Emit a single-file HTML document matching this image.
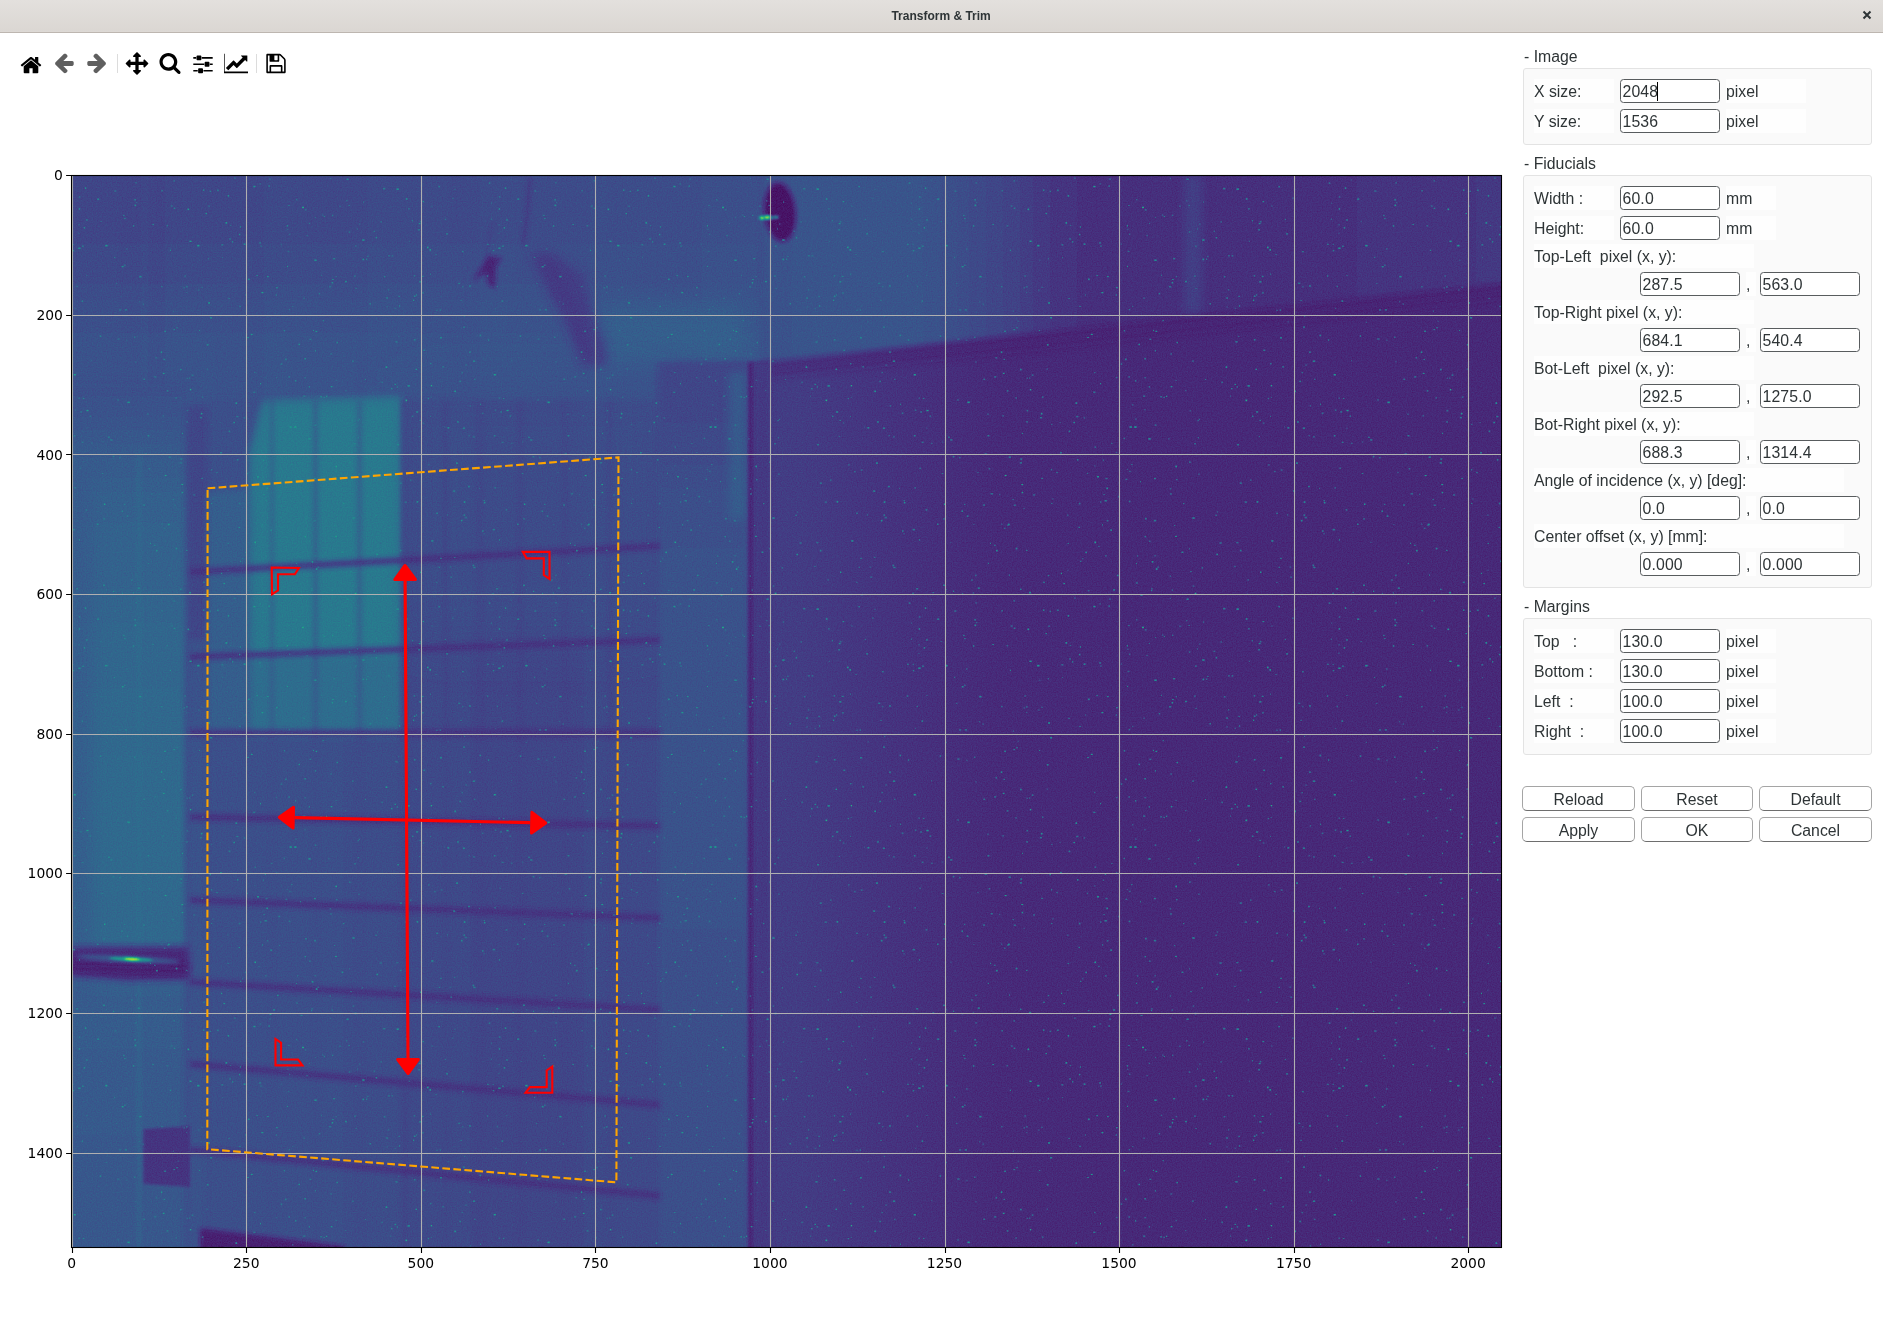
<!DOCTYPE html>
<html><head><meta charset="utf-8"><title>Transform &amp; Trim</title>
<style>
html,body{margin:0;padding:0}
#root{position:absolute;left:0;top:0;width:1883px;height:1343px;will-change:transform}
body{width:1883px;height:1343px;background:#fff;position:relative;overflow:hidden;font-family:"Liberation Sans","DejaVu Sans",sans-serif;color:#2e3436}
.tbar{position:absolute;left:0;top:0;width:1883px;height:32px;background:linear-gradient(#e3e0dd,#dbd7d3 94%,#dedad6);border-bottom:1px solid #bdb6b0}
.ttl{position:absolute;left:-0.4px;width:1883px;top:0;height:33px;line-height:33px;text-align:center;font-weight:bold;font-size:12px;color:#2e3436}
.cls{position:absolute;left:1862px;top:10px;width:10px;height:10px}
.ic{position:absolute;top:51px}
.sep{position:absolute;top:54px;width:1px;height:19px;background:#dcdcdc}
.tl{font-family:"DejaVu Sans","Liberation Sans",sans-serif;font-size:13.89px;fill:#000}
.hd{position:absolute;left:1524px;height:18px;line-height:18px;font-size:15.8px;white-space:nowrap}
.gb{position:absolute;left:1523px;width:349px;background:#fafafa;border:1px solid #e3e3e3;border-radius:3px;box-sizing:border-box}
.lb{position:absolute;background:#fefefe;font-size:15.8px;white-space:nowrap;overflow:hidden}
.sp{position:absolute}
.en{position:absolute;width:100px;height:24px;box-sizing:border-box;border:1px solid #585c5e;border-radius:3.5px;background:#fff;font-size:15.8px;line-height:22px;padding-top:0.5px;padding-left:1.5px;letter-spacing:0.15px;white-space:nowrap}
.cur{display:inline-block;width:1px;height:19px;background:#000;vertical-align:-4px;margin-left:-1px}
.bt{position:absolute;width:113px;height:25px;box-sizing:border-box;border:1px solid #a5a5a5;border-bottom-color:#6e6e6e;border-radius:5px;background:#fff;text-align:center;font-size:15.8px;line-height:23px;padding-top:1px}
</style></head><body><div id="root">
<div class="tbar"></div><div class="ttl">Transform &amp; Trim</div>
<svg class="cls" viewBox="0 0 10 10"><path d="M1.5 1.5 L8.5 8.5 M8.5 1.5 L1.5 8.5" stroke="#2e3436" stroke-width="2" fill="none"/></svg>
<svg class="ic" style="left:19px" viewBox="0 0 72 72" width="24" height="24"><path fill="#000" d="M 57.9 45.9 C 57.9 45.9 57.9 45.8 57.8 45.7 L 36 27.7 L 14.2 45.7 C 14.2 45.8 14.1 45.9 14.1 45.9 L 14.1 64.2 C 14.1 65.5 15.2 66.6 16.6 66.6 L 31.1 66.6 L 31.1 52 L 40.9 52 L 40.9 66.6 L 55.4 66.6 C 56.8 66.6 57.9 65.5 57.9 64.2 z M 66.3 43.3 C 66.7 42.8 66.7 42 66.2 41.6 L 57.9 34.7 L 57.9 19.2 C 57.9 18.5 57.3 18 56.6 18 L 49.4 18 C 48.7 18 48.1 18.5 48.1 19.2 L 48.1 26.6 L 38.9 18.9 C 37.3 17.6 34.7 17.6 33.1 18.9 L 5.8 41.6 C 5.3 42 5.3 42.8 5.7 43.3 L 8 46.1 C 8.2 46.4 8.5 46.5 8.8 46.5 C 9.2 46.6 9.5 46.5 9.7 46.3 L 36 24.4 L 62.3 46.3 C 62.5 46.5 62.7 46.5 63.1 46.5 C 63.1 46.5 63.1 46.5 63.2 46.5 C 63.5 46.5 63.8 46.4 64 46.1 z"/></svg>
<svg class="ic" style="left:52px" viewBox="0 0 72 72" width="24" height="24"><path fill="#5f5f5f" d="M 65.1 35 C 65.1 32.4 63.4 30.2 60.7 30.2 L 34 30.2 L 45.1 19 C 46 18.1 46.6 16.9 46.6 15.6 C 46.6 14.3 46 13 45.1 12.1 L 42.3 9.3 C 41.3 8.4 40.1 7.9 38.8 7.9 C 37.6 7.9 36.3 8.4 35.4 9.3 L 10.7 34 C 9.8 34.9 9.3 36.1 9.3 37.4 C 9.3 38.7 9.8 40 10.7 40.9 L 35.4 65.6 C 36.3 66.5 37.6 67 38.8 67 C 40.1 67 41.4 66.5 42.3 65.6 L 45.1 62.7 C 46 61.8 46.6 60.6 46.6 59.3 C 46.6 58 46 56.8 45.1 55.9 L 34 44.7 L 60.7 44.7 C 63.4 44.7 65.1 42.4 65.1 39.9 z"/></svg>
<svg class="ic" style="left:85px" viewBox="0 0 72 72" width="24" height="24"><path fill="#5f5f5f" d="M 62.7 37.4 C 62.7 36.1 62.2 34.9 61.3 34 L 36.6 9.3 C 35.7 8.4 34.4 7.9 33.2 7.9 C 31.9 7.9 30.6 8.4 29.7 9.3 L 26.9 12.2 C 26 13 25.4 14.3 25.4 15.6 C 25.4 16.9 26 18.1 26.9 19 L 38 30.2 L 11.3 30.2 C 8.6 30.2 6.9 32.4 6.9 35 L 6.9 39.9 C 6.9 42.4 8.6 44.7 11.3 44.7 L 38 44.7 L 26.9 55.8 C 26 56.8 25.4 58 25.4 59.3 C 25.4 60.6 26 61.8 26.9 62.7 L 29.7 65.6 C 30.6 66.5 31.9 67 33.2 67 C 34.4 67 35.7 66.5 36.6 65.6 L 61.3 40.9 C 62.2 40 62.7 38.7 62.7 37.4"/></svg>
<svg class="ic" style="left:125px" viewBox="0 0 72 72" width="24" height="24"><path fill="#000" d="M 70 37.4 C 70 36.8 69.7 36.2 69.3 35.7 L 59.6 26 C 59.1 25.6 58.5 25.3 57.9 25.3 C 56.5 25.3 55.4 26.4 55.4 27.7 L 55.4 32.6 L 40.9 32.6 L 40.9 18 L 45.7 18 C 47 18 48.1 16.9 48.1 15.6 C 48.1 14.9 47.9 14.3 47.4 13.9 L 37.7 4.2 C 37.3 3.7 36.6 3.4 36 3.4 C 35.4 3.4 34.7 3.7 34.3 4.2 L 24.6 13.9 C 24.1 14.3 23.9 14.9 23.9 15.6 C 23.9 16.9 25 18 26.3 18 L 31.1 18 L 31.1 32.6 L 16.6 32.6 L 16.6 27.7 C 16.6 26.4 15.5 25.3 14.1 25.3 C 13.5 25.3 12.9 25.6 12.4 26 L 2.7 35.7 C 2.3 36.2 2 36.8 2 37.4 C 2 38.1 2.3 38.7 2.7 39.2 L 12.4 48.9 C 12.9 49.3 13.5 49.6 14.1 49.6 C 15.5 49.6 16.6 48.5 16.6 47.2 L 16.6 42.3 L 31.1 42.3 L 31.1 56.9 L 26.3 56.9 C 25 56.9 23.9 58 23.9 59.3 C 23.9 59.9 24.1 60.5 24.6 61 L 34.3 70.7 C 34.7 71.2 35.4 71.4 36 71.4 C 36.6 71.4 37.3 71.2 37.7 70.7 L 47.4 61 C 47.9 60.5 48.1 59.9 48.1 59.3 C 48.1 58 47 56.9 45.7 56.9 L 40.9 56.9 L 40.9 42.3 L 55.4 42.3 L 55.4 47.2 C 55.4 48.5 56.5 49.6 57.9 49.6 C 58.5 49.6 59.1 49.3 59.6 48.9 L 69.3 39.2 C 69.7 38.7 70 38.1 70 37.4"/></svg>
<svg class="ic" style="left:158px" viewBox="0 0 72 72" width="24" height="24"><path fill="#000" d="M 48.1 32.6 C 48.1 42 40.5 49.6 31.1 49.6 C 21.8 49.6 14.1 42 14.1 32.6 C 14.1 23.2 21.8 15.6 31.1 15.6 C 40.5 15.6 48.1 23.2 48.1 32.6 M 67.6 64.2 C 67.6 62.9 67 61.6 66.2 60.7 L 53.2 47.7 C 56.2 43.3 57.9 38 57.9 32.6 C 57.9 17.8 45.9 5.9 31.1 5.9 C 16.4 5.9 4.4 17.8 4.4 32.6 C 4.4 47.3 16.4 59.3 31.1 59.3 C 36.5 59.3 41.8 57.7 46.3 54.6 L 59.3 67.6 C 60.2 68.5 61.4 69 62.7 69 C 65.4 69 67.6 66.8 67.6 64.2"/></svg>
<svg class="ic" style="left:191px" viewBox="0 0 72 72" width="24" height="24"><path fill="#000" d="M 20.2 56.9 L 6.9 56.9 L 6.9 61.7 L 20.2 61.7 z M 33.6 52 L 23.9 52 C 22.5 52 21.4 53.1 21.4 54.4 L 21.4 64.2 C 21.4 65.5 22.5 66.6 23.9 66.6 L 33.6 66.6 C 34.9 66.6 36 65.5 36 64.2 L 36 54.4 C 36 53.1 34.9 52 33.6 52 M 39.6 37.4 L 6.9 37.4 L 6.9 42.3 L 39.6 42.3 z M 15.4 18 L 6.9 18 L 6.9 22.9 L 15.4 22.9 z M 65.1 56.9 L 37.2 56.9 L 37.2 61.7 L 65.1 61.7 z M 28.7 13.2 L 19 13.2 C 17.7 13.2 16.6 14.3 16.6 15.6 L 16.6 25.3 C 16.6 26.6 17.7 27.7 19 27.7 L 28.7 27.7 C 30 27.7 31.1 26.6 31.1 25.3 L 31.1 15.6 C 31.1 14.3 30 13.2 28.7 13.2 M 53 32.6 L 43.3 32.6 C 42 32.6 40.9 33.7 40.9 35 L 40.9 44.7 C 40.9 46.1 42 47.2 43.3 47.2 L 53 47.2 C 54.3 47.2 55.4 46.1 55.4 44.7 L 55.4 35 C 55.4 33.7 54.3 32.6 53 32.6 M 65.1 37.4 L 56.6 37.4 L 56.6 42.3 L 65.1 42.3 z M 65.1 18 L 32.4 18 L 32.4 22.9 L 65.1 22.9 z"/></svg>
<svg class="ic" style="left:224px" viewBox="0 0 72 72" width="24" height="24"><path fill="#000" d="M 74.9 61.7 L 2 61.7 L 2 8.3 L -2.9 8.3 L -2.9 66.6 L 74.9 66.6 z M 70 14.4 C 70 13.7 69.5 13.2 68.8 13.2 L 52.3 13.2 C 51.2 13.2 50.7 14.4 51.4 15.2 L 56 19.8 L 38.4 37.4 L 29.6 28.6 C 29.1 28.1 28.3 28.1 27.8 28.6 L 5.6 50.8 L 12.9 58.1 L 28.7 42.3 L 37.6 51.1 C 38.1 51.6 38.8 51.6 39.3 51.1 L 63.3 27.1 L 67.9 31.7 C 68.7 32.5 70 31.9 70 30.9 z"/></svg>
<svg class="ic" style="left:264px" viewBox="0 0 72 72" width="24" height="24"><path fill="#000" d="M 21.4 61.7 L 21.4 47.2 L 50.6 47.2 L 50.6 61.7 z M 55.4 61.7 L 55.4 45.9 C 55.4 43.9 53.8 42.3 51.8 42.3 L 20.2 42.3 C 18.2 42.3 16.6 43.9 16.6 45.9 L 16.6 61.7 L 11.7 61.7 L 11.7 13.2 L 16.6 13.2 L 16.6 28.9 C 16.6 31 18.2 32.6 20.2 32.6 L 42.1 32.6 C 44.1 32.6 45.7 31 45.7 28.9 L 45.7 13.2 C 46.5 13.2 48 13.8 48.5 14.3 L 59.1 25 C 59.6 25.5 60.3 27 60.3 27.7 L 60.3 61.7 z M 40.9 26.5 C 40.9 27.2 40.3 27.7 39.6 27.7 L 32.4 27.7 C 31.7 27.7 31.1 27.2 31.1 26.5 L 31.1 14.4 C 31.1 13.7 31.7 13.2 32.4 13.2 L 39.6 13.2 C 40.3 13.2 40.9 13.7 40.9 14.4 z M 65.1 27.7 C 65.1 25.7 64 22.9 62.6 21.5 L 51.9 10.9 C 50.5 9.4 47.7 8.3 45.7 8.3 L 10.5 8.3 C 8.5 8.3 6.9 9.9 6.9 11.9 L 6.9 62.9 C 6.9 65 8.5 66.6 10.5 66.6 L 61.5 66.6 C 63.5 66.6 65.1 65 65.1 62.9 z"/></svg>
<div class="sep" style="left:117px"></div><div class="sep" style="left:256px"></div>
<svg width="1512" height="1343" viewBox="0 0 1512 1343" style="position:absolute;left:0;top:0">
<defs><filter id="b1" filterUnits="userSpaceOnUse" x="0" y="100" width="1600" height="1250"><feGaussianBlur stdDeviation="1"/></filter><filter id="b2" filterUnits="userSpaceOnUse" x="0" y="100" width="1600" height="1250"><feGaussianBlur stdDeviation="2"/></filter><filter id="b3" filterUnits="userSpaceOnUse" x="0" y="100" width="1600" height="1250"><feGaussianBlur stdDeviation="3"/></filter><filter id="b4" filterUnits="userSpaceOnUse" x="0" y="100" width="1600" height="1250"><feGaussianBlur stdDeviation="4"/></filter><filter id="b5" filterUnits="userSpaceOnUse" x="0" y="100" width="1600" height="1250"><feGaussianBlur stdDeviation="5"/></filter><filter id="b6" filterUnits="userSpaceOnUse" x="0" y="100" width="1600" height="1250"><feGaussianBlur stdDeviation="6"/></filter><filter id="b8" filterUnits="userSpaceOnUse" x="0" y="100" width="1600" height="1250"><feGaussianBlur stdDeviation="8"/></filter><filter id="b10" filterUnits="userSpaceOnUse" x="0" y="100" width="1600" height="1250"><feGaussianBlur stdDeviation="10"/></filter><filter id="b12" filterUnits="userSpaceOnUse" x="0" y="100" width="1600" height="1250"><feGaussianBlur stdDeviation="12"/></filter><filter id="b14" filterUnits="userSpaceOnUse" x="0" y="100" width="1600" height="1250"><feGaussianBlur stdDeviation="14"/></filter><filter id="b20" filterUnits="userSpaceOnUse" x="0" y="100" width="1600" height="1250"><feGaussianBlur stdDeviation="20"/></filter><filter id="b25" filterUnits="userSpaceOnUse" x="0" y="100" width="1600" height="1250"><feGaussianBlur stdDeviation="25"/></filter><filter id="b28" filterUnits="userSpaceOnUse" x="0" y="100" width="1600" height="1250"><feGaussianBlur stdDeviation="28"/></filter><filter id="b30" filterUnits="userSpaceOnUse" x="0" y="100" width="1600" height="1250"><feGaussianBlur stdDeviation="30"/></filter><filter id="b40" filterUnits="userSpaceOnUse" x="0" y="100" width="1600" height="1250"><feGaussianBlur stdDeviation="40"/></filter><linearGradient id="gbase" gradientUnits="userSpaceOnUse" x1="750" y1="0" x2="1501" y2="0"><stop offset="0.0000" stop-color="#2e2e2e"/><stop offset="0.0666" stop-color="#2d2d2d"/><stop offset="0.1411" stop-color="#282828"/><stop offset="0.2077" stop-color="#242424"/><stop offset="0.3329" stop-color="#1e1e1e"/><stop offset="0.5326" stop-color="#1d1d1d"/><stop offset="1.0000" stop-color="#1d1d1d"/></linearGradient><linearGradient id="gup" gradientUnits="userSpaceOnUse" x1="760" y1="0" x2="1501" y2="0"><stop offset="0.0000" stop-color="#404040"/><stop offset="0.0810" stop-color="#434343"/><stop offset="0.2159" stop-color="#424242"/><stop offset="0.3320" stop-color="#333333"/><stop offset="0.4049" stop-color="#262626"/><stop offset="0.4669" stop-color="#222222"/><stop offset="0.7287" stop-color="#202020"/><stop offset="0.7962" stop-color="#242424"/><stop offset="0.8718" stop-color="#282828"/><stop offset="1.0000" stop-color="#292929"/></linearGradient><linearGradient id="gtopv" gradientUnits="userSpaceOnUse" x1="0" y1="176" x2="0" y2="400"><stop offset="0.0000" stop-color="#353535"/><stop offset="0.2411" stop-color="#363636"/><stop offset="0.4196" stop-color="#383838"/><stop offset="0.5982" stop-color="#3d3d3d"/><stop offset="0.7768" stop-color="#404040"/><stop offset="1.0000" stop-color="#404040"/></linearGradient><linearGradient id="gtoph" gradientUnits="userSpaceOnUse" x1="100" y1="0" x2="760" y2="0"><stop offset="0.0000" stop-color="#4c4c4c" stop-opacity="0"/><stop offset="0.3727" stop-color="#4c4c4c" stop-opacity="0.13"/><stop offset="0.9182" stop-color="#4c4c4c" stop-opacity="0.3"/><stop offset="1.0000" stop-color="#4c4c4c" stop-opacity="0.3"/></linearGradient><linearGradient id="gcol" gradientUnits="userSpaceOnUse" x1="0" y1="384" x2="0" y2="1250"><stop offset="0.0000" stop-color="#3d3d3d"/><stop offset="0.0647" stop-color="#454545"/><stop offset="0.1339" stop-color="#4e4e4e"/><stop offset="0.4804" stop-color="#575757"/><stop offset="0.6363" stop-color="#555555"/><stop offset="0.7113" stop-color="#4a4a4a"/><stop offset="0.8083" stop-color="#464646"/><stop offset="1.0000" stop-color="#454545"/></linearGradient><linearGradient id="gboard" gradientUnits="userSpaceOnUse" x1="208" y1="0" x2="660" y2="0"><stop offset="0.0000" stop-color="#3e3e3e"/><stop offset="0.2035" stop-color="#3d3d3d"/><stop offset="0.4690" stop-color="#393939"/><stop offset="0.6460" stop-color="#353535"/><stop offset="0.8673" stop-color="#373737"/><stop offset="1.0000" stop-color="#383838"/></linearGradient><linearGradient id="grb" gradientUnits="userSpaceOnUse" x1="0" y1="362" x2="0" y2="1250"><stop offset="0.0000" stop-color="#343434"/><stop offset="0.0766" stop-color="#373737"/><stop offset="0.1779" stop-color="#3e3e3e"/><stop offset="0.2680" stop-color="#404040"/><stop offset="0.3806" stop-color="#404040"/><stop offset="1.0000" stop-color="#3d3d3d"/></linearGradient><pattern id="salt" patternUnits="userSpaceOnUse" width="420" height="420" x="72" y="176"><rect x="32.0" y="327.6" width="1.3" height="1.3" fill="#989898"/><rect x="129.4" y="110.8" width="1.5" height="1.0" fill="#5b5b5b"/><rect x="6.7" y="221.7" width="0.9" height="0.9" fill="#8c8c8c"/><rect x="165.0" y="283.2" width="1.3" height="1.3" fill="#858585"/><rect x="390.4" y="110.3" width="0.9" height="0.9" fill="#7f7f7f"/><rect x="357.5" y="73.1" width="1.5" height="1.5" fill="#959595"/><rect x="150.1" y="81.2" width="0.9" height="0.9" fill="#646464"/><rect x="257.8" y="399.5" width="1.1" height="1.1" fill="#696969"/><rect x="322.8" y="131.9" width="0.9" height="0.9" fill="#696969"/><rect x="148.3" y="276.1" width="1.3" height="1.3" fill="#949494"/><rect x="175.9" y="414.2" width="1.5" height="1.0" fill="#636363"/><rect x="211.7" y="261.8" width="1.3" height="1.3" fill="#686868"/><rect x="280.2" y="184.6" width="1.5" height="1.0" fill="#797979"/><rect x="309.4" y="205.6" width="1.5" height="1.5" fill="#5a5a5a"/><rect x="248.9" y="98.8" width="1.1" height="1.1" fill="#606060"/><rect x="198.4" y="353.4" width="1.5" height="1.5" fill="#7a7a7a"/><rect x="194.5" y="311.6" width="1.5" height="1.5" fill="#848484"/><rect x="136.3" y="126.2" width="1.5" height="1.5" fill="#969696"/><rect x="188.2" y="325.5" width="1.1" height="1.1" fill="#797979"/><rect x="335.6" y="209.1" width="2.2" height="1.5" fill="#838383"/><rect x="112.6" y="99.5" width="1.0" height="1.0" fill="#919191"/><rect x="97.9" y="73.8" width="1.0" height="1.0" fill="#8f8f8f"/><rect x="276.7" y="29.1" width="0.9" height="0.9" fill="#8d8d8d"/><rect x="396.3" y="309.9" width="1.3" height="1.3" fill="#8d8d8d"/><rect x="215.6" y="74.9" width="1.7" height="1.1" fill="#5a5a5a"/><rect x="348.0" y="395.6" width="1.3" height="1.3" fill="#8d8d8d"/><rect x="276.8" y="55.6" width="1.4" height="0.9" fill="#7b7b7b"/><rect x="71.2" y="328.5" width="1.7" height="1.1" fill="#777777"/><rect x="231.2" y="219.5" width="2.0" height="1.3" fill="#686868"/><rect x="368.2" y="381.9" width="1.5" height="1.0" fill="#747474"/><rect x="355.0" y="70.7" width="1.5" height="1.5" fill="#8c8c8c"/><rect x="144.2" y="296.1" width="1.5" height="1.0" fill="#696969"/><rect x="18.8" y="3.5" width="0.9" height="0.9" fill="#5b5b5b"/><rect x="419.7" y="217.5" width="0.9" height="0.9" fill="#5d5d5d"/><rect x="139.2" y="247.9" width="1.1" height="1.1" fill="#595959"/><rect x="101.5" y="4.4" width="1.5" height="1.0" fill="#6d6d6d"/><rect x="192.6" y="324.0" width="2.2" height="1.5" fill="#6e6e6e"/><rect x="366.5" y="10.0" width="1.3" height="1.3" fill="#7b7b7b"/><rect x="382.5" y="12.8" width="0.9" height="0.9" fill="#6c6c6c"/><rect x="76.7" y="292.3" width="1.5" height="1.0" fill="#797979"/><rect x="273.2" y="214.1" width="1.0" height="1.0" fill="#616161"/><rect x="323.4" y="165.1" width="2.2" height="1.5" fill="#646464"/><rect x="347.8" y="44.9" width="1.5" height="1.5" fill="#5f5f5f"/><rect x="189.5" y="116.1" width="1.7" height="1.1" fill="#949494"/><rect x="0.8" y="74.3" width="1.4" height="0.9" fill="#888888"/><rect x="2.6" y="311.3" width="1.1" height="1.1" fill="#838383"/><rect x="162.5" y="1.7" width="0.9" height="0.9" fill="#979797"/><rect x="114.3" y="110.3" width="1.1" height="1.1" fill="#878787"/><rect x="319.7" y="79.0" width="1.5" height="1.5" fill="#5d5d5d"/><rect x="250.3" y="38.6" width="1.0" height="1.0" fill="#717171"/><rect x="109.8" y="315.9" width="1.3" height="1.3" fill="#8a8a8a"/><rect x="347.5" y="243.9" width="1.5" height="1.0" fill="#6c6c6c"/><rect x="239.0" y="414.0" width="1.1" height="1.1" fill="#737373"/><rect x="51.3" y="38.9" width="1.1" height="1.1" fill="#828282"/><rect x="114.0" y="373.9" width="1.4" height="0.9" fill="#7b7b7b"/><rect x="137.7" y="14.8" width="1.1" height="1.1" fill="#7e7e7e"/><rect x="375.5" y="251.3" width="1.7" height="1.1" fill="#989898"/><rect x="407.6" y="158.7" width="1.5" height="1.5" fill="#6f6f6f"/><rect x="236.4" y="262.1" width="2.2" height="1.5" fill="#818181"/><rect x="75.6" y="259.2" width="1.7" height="1.1" fill="#818181"/><rect x="67.2" y="125.2" width="1.0" height="1.0" fill="#626262"/><rect x="351.4" y="173.7" width="1.7" height="1.1" fill="#7a7a7a"/><rect x="391.0" y="150.5" width="2.0" height="1.3" fill="#686868"/><rect x="114.3" y="116.0" width="0.9" height="0.9" fill="#616161"/><rect x="290.6" y="82.7" width="1.5" height="1.5" fill="#818181"/><rect x="49.8" y="90.2" width="1.7" height="1.1" fill="#939393"/><rect x="197.3" y="2.4" width="1.5" height="1.5" fill="#585858"/><rect x="163.6" y="226.4" width="1.5" height="1.5" fill="#8d8d8d"/><rect x="182.5" y="365.6" width="1.5" height="1.5" fill="#919191"/><rect x="374.3" y="57.1" width="1.5" height="1.5" fill="#777777"/><rect x="349.8" y="99.9" width="1.7" height="1.1" fill="#707070"/><rect x="82.2" y="200.2" width="2.0" height="1.3" fill="#656565"/><rect x="287.4" y="47.6" width="0.9" height="0.9" fill="#797979"/><rect x="381.2" y="314.4" width="1.3" height="1.3" fill="#7c7c7c"/><rect x="283.1" y="69.6" width="1.5" height="1.0" fill="#747474"/><rect x="204.2" y="276.1" width="1.0" height="1.0" fill="#5e5e5e"/><rect x="382.1" y="314.7" width="1.1" height="1.1" fill="#7b7b7b"/><rect x="311.1" y="11.9" width="2.2" height="1.5" fill="#6a6a6a"/><rect x="308.6" y="45.4" width="1.1" height="1.1" fill="#737373"/><rect x="208.8" y="67.5" width="1.1" height="1.1" fill="#575757"/><rect x="188.0" y="207.2" width="1.0" height="1.0" fill="#919191"/><rect x="226.6" y="167.8" width="1.3" height="1.3" fill="#878787"/><rect x="1.8" y="198.1" width="2.0" height="1.3" fill="#999999"/><rect x="390.1" y="75.2" width="1.5" height="1.0" fill="#818181"/><rect x="419.5" y="26.6" width="1.0" height="1.0" fill="#868686"/><rect x="41.0" y="414.8" width="1.1" height="1.1" fill="#808080"/><rect x="327.8" y="306.5" width="2.0" height="1.3" fill="#6d6d6d"/><rect x="140.4" y="322.5" width="0.9" height="0.9" fill="#747474"/><rect x="9.6" y="124.4" width="1.5" height="1.5" fill="#6e6e6e"/><rect x="36.4" y="260.7" width="1.1" height="1.1" fill="#929292"/><rect x="14.5" y="233.9" width="2.0" height="1.3" fill="#8c8c8c"/><rect x="374.9" y="338.3" width="1.1" height="1.1" fill="#636363"/><rect x="369.4" y="419.2" width="1.0" height="1.0" fill="#5e5e5e"/><rect x="166.7" y="350.9" width="1.0" height="1.0" fill="#959595"/><rect x="94.6" y="49.3" width="1.5" height="1.0" fill="#6f6f6f"/><rect x="134.7" y="192.6" width="0.9" height="0.9" fill="#7f7f7f"/><rect x="92.4" y="154.7" width="1.3" height="1.3" fill="#8d8d8d"/><rect x="136.2" y="29.6" width="1.7" height="1.1" fill="#656565"/><rect x="259.8" y="106.1" width="1.3" height="1.3" fill="#8f8f8f"/><rect x="205.1" y="398.8" width="1.3" height="1.3" fill="#828282"/><rect x="105.7" y="144.8" width="0.9" height="0.9" fill="#5b5b5b"/><rect x="283.4" y="112.1" width="1.4" height="0.9" fill="#626262"/><rect x="359.3" y="364.3" width="2.0" height="1.3" fill="#888888"/><rect x="211.8" y="154.1" width="1.3" height="1.3" fill="#717171"/><rect x="62.2" y="160.7" width="1.1" height="1.1" fill="#7d7d7d"/><rect x="33.3" y="68.9" width="2.2" height="1.5" fill="#8a8a8a"/><rect x="291.0" y="25.5" width="1.1" height="1.1" fill="#646464"/><rect x="49.5" y="334.5" width="1.5" height="1.5" fill="#6f6f6f"/><rect x="114.3" y="245.1" width="1.5" height="1.5" fill="#636363"/><rect x="364.5" y="336.7" width="1.1" height="1.1" fill="#989898"/><rect x="153.6" y="46.1" width="1.5" height="1.5" fill="#939393"/><rect x="203.9" y="201.1" width="1.5" height="1.0" fill="#585858"/><rect x="390.9" y="251.6" width="2.0" height="1.3" fill="#777777"/><rect x="234.6" y="59.3" width="0.9" height="0.9" fill="#858585"/><rect x="385.1" y="245.4" width="1.7" height="1.1" fill="#888888"/><rect x="157.8" y="49.1" width="1.4" height="0.9" fill="#5f5f5f"/><rect x="4.1" y="412.1" width="2.0" height="1.3" fill="#6d6d6d"/><rect x="182.3" y="196.1" width="1.0" height="1.0" fill="#767676"/><rect x="228.7" y="419.1" width="1.7" height="1.1" fill="#797979"/><rect x="346.3" y="53.0" width="1.5" height="1.5" fill="#6f6f6f"/><rect x="362.3" y="295.1" width="1.1" height="1.1" fill="#757575"/><rect x="381.9" y="381.0" width="1.4" height="0.9" fill="#686868"/><rect x="6.5" y="56.8" width="0.9" height="0.9" fill="#6a6a6a"/><rect x="114.6" y="233.9" width="1.5" height="1.5" fill="#5f5f5f"/><rect x="27.8" y="159.4" width="1.3" height="1.3" fill="#797979"/><rect x="333.9" y="22.2" width="1.5" height="1.5" fill="#828282"/><rect x="280.7" y="409.6" width="1.5" height="1.0" fill="#656565"/><rect x="52.2" y="327.9" width="1.0" height="1.0" fill="#757575"/><rect x="65.2" y="296.2" width="1.4" height="0.9" fill="#585858"/><rect x="303.6" y="338.7" width="1.1" height="1.1" fill="#868686"/><rect x="260.2" y="103.1" width="1.4" height="0.9" fill="#8d8d8d"/><rect x="13.7" y="333.1" width="1.5" height="1.5" fill="#646464"/><rect x="14.4" y="251.6" width="0.9" height="0.9" fill="#616161"/><rect x="96.7" y="280.5" width="2.2" height="1.5" fill="#666666"/><rect x="243.0" y="41.0" width="0.9" height="0.9" fill="#626262"/><rect x="364.3" y="133.8" width="1.4" height="0.9" fill="#6a6a6a"/><rect x="293.1" y="203.1" width="0.9" height="0.9" fill="#7b7b7b"/><rect x="31.1" y="408.7" width="1.7" height="1.1" fill="#8c8c8c"/><rect x="248.4" y="220.4" width="1.4" height="0.9" fill="#969696"/><rect x="117.5" y="64.7" width="2.0" height="1.3" fill="#8e8e8e"/><rect x="94.9" y="348.6" width="1.7" height="1.1" fill="#616161"/><rect x="316.0" y="113.3" width="1.1" height="1.1" fill="#686868"/><rect x="90.9" y="196.9" width="1.5" height="1.0" fill="#989898"/><rect x="391.6" y="338.6" width="1.5" height="1.0" fill="#888888"/><rect x="346.9" y="260.1" width="0.9" height="0.9" fill="#6b6b6b"/><rect x="0.3" y="416.8" width="1.5" height="1.5" fill="#5f5f5f"/><rect x="336.1" y="32.0" width="1.5" height="1.5" fill="#606060"/><rect x="103.8" y="371.8" width="1.5" height="1.5" fill="#797979"/><rect x="64.1" y="26.0" width="1.1" height="1.1" fill="#5f5f5f"/><rect x="54.1" y="72.3" width="1.3" height="1.3" fill="#5e5e5e"/><rect x="175.3" y="161.0" width="1.5" height="1.0" fill="#828282"/><rect x="42.3" y="14.4" width="2.0" height="1.3" fill="#616161"/><rect x="168.1" y="384.8" width="1.1" height="1.1" fill="#797979"/><rect x="101.8" y="328.6" width="2.0" height="1.3" fill="#5c5c5c"/><rect x="264.6" y="165.9" width="1.3" height="1.3" fill="#7d7d7d"/><rect x="326.4" y="119.9" width="1.5" height="1.0" fill="#6d6d6d"/><rect x="400.6" y="388.7" width="1.5" height="1.5" fill="#6c6c6c"/><rect x="341.9" y="163.0" width="1.5" height="1.5" fill="#707070"/><rect x="45.3" y="162.3" width="2.2" height="1.5" fill="#5a5a5a"/><rect x="388.4" y="123.9" width="1.4" height="0.9" fill="#6c6c6c"/><rect x="363.4" y="78.1" width="1.4" height="0.9" fill="#5c5c5c"/><rect x="358.1" y="187.0" width="1.3" height="1.3" fill="#6c6c6c"/><rect x="219.3" y="288.0" width="1.1" height="1.1" fill="#727272"/><rect x="322.6" y="207.9" width="1.4" height="0.9" fill="#878787"/><rect x="217.6" y="250.3" width="2.2" height="1.5" fill="#8b8b8b"/><rect x="225.0" y="379.4" width="1.1" height="1.1" fill="#6c6c6c"/><rect x="107.8" y="286.1" width="2.2" height="1.5" fill="#626262"/><rect x="267.4" y="29.7" width="1.1" height="1.1" fill="#6d6d6d"/><rect x="164.3" y="239.9" width="2.0" height="1.3" fill="#676767"/><rect x="241.9" y="343.9" width="2.2" height="1.5" fill="#656565"/><rect x="242.3" y="301.9" width="1.3" height="1.3" fill="#949494"/><rect x="367.7" y="133.4" width="1.3" height="1.3" fill="#6a6a6a"/><rect x="184.6" y="99.0" width="1.1" height="1.1" fill="#858585"/><rect x="213.1" y="182.6" width="1.5" height="1.5" fill="#6f6f6f"/><rect x="282.3" y="267.3" width="1.5" height="1.0" fill="#7f7f7f"/><rect x="358.1" y="239.9" width="0.9" height="0.9" fill="#696969"/><rect x="294.1" y="82.7" width="1.0" height="1.0" fill="#8a8a8a"/><rect x="155.8" y="19.2" width="1.3" height="1.3" fill="#959595"/><rect x="263.7" y="203.9" width="0.9" height="0.9" fill="#757575"/><rect x="350.6" y="25.1" width="1.5" height="1.0" fill="#818181"/><rect x="94.8" y="214.4" width="1.5" height="1.0" fill="#858585"/><rect x="130.9" y="405.7" width="2.0" height="1.3" fill="#5e5e5e"/><rect x="145.1" y="13.7" width="1.5" height="1.0" fill="#8c8c8c"/><rect x="343.6" y="192.7" width="1.3" height="1.3" fill="#898989"/><rect x="282.4" y="99.6" width="1.1" height="1.1" fill="#8d8d8d"/><rect x="242.6" y="379.3" width="1.1" height="1.1" fill="#6a6a6a"/><rect x="119.8" y="198.4" width="1.5" height="1.5" fill="#626262"/><rect x="201.3" y="413.2" width="1.5" height="1.5" fill="#878787"/><rect x="307.5" y="366.3" width="2.2" height="1.5" fill="#5b5b5b"/><rect x="19.2" y="184.3" width="0.9" height="0.9" fill="#5e5e5e"/><rect x="67.3" y="99.9" width="2.2" height="1.5" fill="#7a7a7a"/><rect x="273.3" y="104.9" width="1.3" height="1.3" fill="#949494"/><rect x="182.6" y="270.5" width="1.3" height="1.3" fill="#696969"/><rect x="92.8" y="299.0" width="1.7" height="1.1" fill="#959595"/><rect x="114.8" y="201.8" width="0.9" height="0.9" fill="#808080"/><rect x="408.1" y="227.8" width="0.9" height="0.9" fill="#8f8f8f"/><rect x="263.1" y="359.9" width="1.7" height="1.1" fill="#888888"/><rect x="339.9" y="44.2" width="1.1" height="1.1" fill="#707070"/><rect x="139.3" y="327.0" width="0.9" height="0.9" fill="#909090"/><rect x="108.4" y="282.5" width="1.7" height="1.1" fill="#7e7e7e"/><rect x="264.0" y="303.3" width="1.4" height="0.9" fill="#808080"/><rect x="25.0" y="347.7" width="1.5" height="1.0" fill="#8d8d8d"/><rect x="34.1" y="413.3" width="0.9" height="0.9" fill="#626262"/><rect x="269.6" y="375.7" width="1.7" height="1.1" fill="#868686"/><rect x="166.9" y="326.8" width="1.5" height="1.5" fill="#676767"/><rect x="393.6" y="188.6" width="0.9" height="0.9" fill="#8b8b8b"/><rect x="126.4" y="113.6" width="0.9" height="0.9" fill="#818181"/><rect x="171.7" y="67.6" width="1.7" height="1.1" fill="#969696"/><rect x="100.7" y="323.2" width="0.9" height="0.9" fill="#8a8a8a"/><rect x="311.9" y="100.3" width="1.4" height="0.9" fill="#818181"/><rect x="386.2" y="106.7" width="2.0" height="1.3" fill="#686868"/><rect x="70.7" y="127.6" width="1.0" height="1.0" fill="#6f6f6f"/><rect x="232.5" y="201.3" width="1.4" height="0.9" fill="#717171"/><rect x="173.5" y="375.8" width="1.3" height="1.3" fill="#939393"/><rect x="356.2" y="288.2" width="1.3" height="1.3" fill="#5d5d5d"/><rect x="204.1" y="111.2" width="1.5" height="1.0" fill="#8c8c8c"/><rect x="324.6" y="12.4" width="2.2" height="1.5" fill="#878787"/><rect x="305.1" y="335.5" width="1.0" height="1.0" fill="#646464"/><rect x="206.4" y="319.8" width="1.5" height="1.5" fill="#6e6e6e"/><rect x="418.9" y="42.7" width="1.0" height="1.0" fill="#6c6c6c"/><rect x="1.9" y="259.0" width="1.5" height="1.5" fill="#6c6c6c"/><rect x="407.1" y="311.9" width="0.9" height="0.9" fill="#6b6b6b"/><rect x="372.2" y="250.6" width="0.9" height="0.9" fill="#585858"/><rect x="50.2" y="417.4" width="0.9" height="0.9" fill="#8d8d8d"/><rect x="167.9" y="50.4" width="1.1" height="1.1" fill="#858585"/><rect x="111.7" y="332.1" width="0.9" height="0.9" fill="#5f5f5f"/><rect x="215.3" y="52.8" width="1.0" height="1.0" fill="#656565"/><rect x="60.9" y="49.3" width="1.3" height="1.3" fill="#818181"/><rect x="237.1" y="364.7" width="1.4" height="0.9" fill="#7d7d7d"/><rect x="409.8" y="236.6" width="1.5" height="1.5" fill="#606060"/><rect x="139.0" y="293.2" width="1.1" height="1.1" fill="#767676"/><rect x="38.3" y="263.3" width="2.0" height="1.3" fill="#737373"/><rect x="63.4" y="185.4" width="1.0" height="1.0" fill="#646464"/><rect x="103.6" y="221.4" width="1.1" height="1.1" fill="#787878"/><rect x="127.1" y="154.0" width="1.0" height="1.0" fill="#7b7b7b"/><rect x="9.8" y="265.8" width="1.7" height="1.1" fill="#6a6a6a"/><rect x="319.0" y="212.3" width="1.4" height="0.9" fill="#979797"/><rect x="87.2" y="317.9" width="1.0" height="1.0" fill="#5e5e5e"/><rect x="324.8" y="210.5" width="1.0" height="1.0" fill="#8d8d8d"/><rect x="277.7" y="234.3" width="1.1" height="1.1" fill="#5d5d5d"/><rect x="91.7" y="182.9" width="1.0" height="1.0" fill="#979797"/><rect x="245.6" y="390.6" width="1.1" height="1.1" fill="#737373"/><rect x="199.3" y="266.9" width="1.1" height="1.1" fill="#656565"/><rect x="241.0" y="153.9" width="1.0" height="1.0" fill="#808080"/><rect x="397.8" y="229.2" width="1.3" height="1.3" fill="#595959"/><rect x="6.9" y="20.5" width="1.4" height="0.9" fill="#7e7e7e"/><rect x="4.7" y="109.8" width="1.3" height="1.3" fill="#5f5f5f"/><rect x="96.1" y="347.7" width="1.5" height="1.5" fill="#8a8a8a"/><rect x="185.0" y="300.1" width="2.0" height="1.3" fill="#8b8b8b"/><rect x="327.0" y="129.4" width="1.1" height="1.1" fill="#898989"/><rect x="250.7" y="144.1" width="1.0" height="1.0" fill="#7d7d7d"/><rect x="344.1" y="235.3" width="2.0" height="1.3" fill="#7a7a7a"/><rect x="121.1" y="318.3" width="2.0" height="1.3" fill="#5a5a5a"/><rect x="375.7" y="145.4" width="0.9" height="0.9" fill="#696969"/><rect x="410.0" y="354.5" width="1.5" height="1.0" fill="#8f8f8f"/><rect x="101.6" y="153.0" width="1.1" height="1.1" fill="#8a8a8a"/><rect x="135.8" y="399.2" width="1.4" height="0.9" fill="#808080"/><rect x="401.4" y="390.8" width="2.0" height="1.3" fill="#6f6f6f"/><rect x="181.4" y="9.9" width="2.0" height="1.3" fill="#8d8d8d"/><rect x="223.9" y="406.3" width="2.0" height="1.3" fill="#5f5f5f"/><rect x="101.8" y="31.8" width="1.4" height="0.9" fill="#8c8c8c"/><rect x="239.4" y="412.3" width="1.1" height="1.1" fill="#818181"/><rect x="392.7" y="340.8" width="2.2" height="1.5" fill="#5c5c5c"/><rect x="259.8" y="413.6" width="1.0" height="1.0" fill="#818181"/><rect x="111.7" y="111.4" width="1.0" height="1.0" fill="#7c7c7c"/><rect x="178.9" y="157.9" width="1.7" height="1.1" fill="#8c8c8c"/><rect x="187.7" y="7.5" width="0.9" height="0.9" fill="#858585"/><rect x="33.9" y="145.9" width="0.9" height="0.9" fill="#6a6a6a"/><rect x="402.2" y="202.8" width="1.1" height="1.1" fill="#717171"/><rect x="88.9" y="175.5" width="1.3" height="1.3" fill="#929292"/><rect x="242.8" y="248.6" width="1.5" height="1.0" fill="#7e7e7e"/><rect x="344.7" y="325.1" width="1.5" height="1.5" fill="#898989"/><rect x="232.7" y="360.1" width="1.1" height="1.1" fill="#939393"/><rect x="332.7" y="325.4" width="2.2" height="1.5" fill="#595959"/><rect x="391.8" y="325.3" width="1.5" height="1.5" fill="#8a8a8a"/><rect x="8.4" y="235.2" width="1.5" height="1.5" fill="#676767"/><rect x="10.3" y="69.6" width="1.3" height="1.3" fill="#7f7f7f"/><rect x="186.2" y="370.0" width="1.4" height="0.9" fill="#646464"/><rect x="246.8" y="117.0" width="1.3" height="1.3" fill="#6c6c6c"/><rect x="156.7" y="254.6" width="1.5" height="1.5" fill="#6b6b6b"/><rect x="251.5" y="220.9" width="1.4" height="0.9" fill="#7c7c7c"/><rect x="258.8" y="210.2" width="1.5" height="1.0" fill="#989898"/><rect x="89.3" y="347.7" width="0.9" height="0.9" fill="#717171"/><rect x="109.4" y="308.0" width="1.7" height="1.1" fill="#909090"/><rect x="258.2" y="317.2" width="1.5" height="1.5" fill="#5e5e5e"/><rect x="170.2" y="382.2" width="1.0" height="1.0" fill="#686868"/><rect x="335.6" y="403.3" width="1.3" height="1.3" fill="#616161"/><rect x="285.0" y="52.5" width="0.9" height="0.9" fill="#737373"/><rect x="7.0" y="363.4" width="1.0" height="1.0" fill="#909090"/><rect x="100.9" y="134.6" width="1.1" height="1.1" fill="#575757"/><rect x="155.7" y="366.9" width="1.1" height="1.1" fill="#727272"/><rect x="213.5" y="302.8" width="1.7" height="1.1" fill="#656565"/><rect x="286.9" y="242.9" width="0.9" height="0.9" fill="#848484"/><rect x="355.9" y="222.2" width="0.9" height="0.9" fill="#8f8f8f"/><rect x="263.8" y="100.1" width="1.0" height="1.0" fill="#707070"/><rect x="52.3" y="88.7" width="1.1" height="1.1" fill="#7d7d7d"/><rect x="2.9" y="233.5" width="1.3" height="1.3" fill="#626262"/><rect x="125.2" y="68.9" width="2.2" height="1.5" fill="#8b8b8b"/><rect x="110.0" y="256.9" width="0.9" height="0.9" fill="#979797"/><rect x="415.2" y="67.8" width="1.4" height="0.9" fill="#8e8e8e"/><rect x="45.3" y="223.5" width="1.5" height="1.0" fill="#696969"/><rect x="340.0" y="239.7" width="1.3" height="1.3" fill="#717171"/><rect x="40.8" y="279.9" width="1.5" height="1.5" fill="#6a6a6a"/><rect x="0.7" y="67.9" width="1.1" height="1.1" fill="#5f5f5f"/><rect x="190.9" y="283.7" width="0.9" height="0.9" fill="#858585"/><rect x="318.0" y="219.6" width="1.0" height="1.0" fill="#5c5c5c"/><rect x="378.6" y="400.6" width="1.1" height="1.1" fill="#858585"/><rect x="359.5" y="29.6" width="0.9" height="0.9" fill="#727272"/><rect x="377.6" y="390.6" width="1.5" height="1.0" fill="#5a5a5a"/><rect x="29.8" y="297.1" width="1.4" height="0.9" fill="#737373"/><rect x="54.4" y="163.8" width="1.0" height="1.0" fill="#5b5b5b"/><rect x="256.3" y="262.3" width="1.1" height="1.1" fill="#5d5d5d"/><rect x="115.6" y="32.6" width="1.5" height="1.5" fill="#8e8e8e"/><rect x="228.0" y="305.3" width="0.9" height="0.9" fill="#909090"/><rect x="231.6" y="121.7" width="0.9" height="0.9" fill="#919191"/><rect x="372.9" y="42.9" width="1.0" height="1.0" fill="#737373"/><rect x="280.4" y="341.3" width="2.2" height="1.5" fill="#797979"/><rect x="55.5" y="225.6" width="2.2" height="1.5" fill="#8a8a8a"/><rect x="191.6" y="318.1" width="0.9" height="0.9" fill="#878787"/><rect x="358.8" y="209.0" width="1.3" height="1.3" fill="#999999"/><rect x="52.9" y="133.2" width="2.0" height="1.3" fill="#6d6d6d"/><rect x="325.2" y="268.2" width="1.7" height="1.1" fill="#858585"/><rect x="261.1" y="82.0" width="2.0" height="1.3" fill="#6f6f6f"/><rect x="117.3" y="415.9" width="1.5" height="1.5" fill="#929292"/><rect x="282.8" y="416.8" width="1.5" height="1.5" fill="#989898"/><rect x="155.5" y="393.8" width="0.9" height="0.9" fill="#5b5b5b"/><rect x="350.3" y="116.2" width="1.3" height="1.3" fill="#717171"/><rect x="290.3" y="63.3" width="2.2" height="1.5" fill="#808080"/><rect x="59.4" y="403.5" width="1.1" height="1.1" fill="#868686"/><rect x="263.5" y="289.7" width="1.5" height="1.5" fill="#8d8d8d"/><rect x="75.4" y="237.6" width="1.1" height="1.1" fill="#6f6f6f"/><rect x="233.1" y="341.9" width="1.5" height="1.5" fill="#737373"/><rect x="72.7" y="277.4" width="2.2" height="1.5" fill="#6e6e6e"/><rect x="346.8" y="47.0" width="1.7" height="1.1" fill="#858585"/><rect x="397.2" y="109.2" width="1.5" height="1.5" fill="#787878"/><rect x="215.0" y="89.9" width="1.0" height="1.0" fill="#8c8c8c"/><rect x="258.6" y="177.4" width="1.1" height="1.1" fill="#7a7a7a"/><rect x="388.9" y="343.9" width="1.5" height="1.5" fill="#7b7b7b"/><rect x="224.2" y="23.3" width="1.0" height="1.0" fill="#7a7a7a"/><rect x="277.0" y="372.3" width="1.0" height="1.0" fill="#636363"/><rect x="89.5" y="14.1" width="1.3" height="1.3" fill="#6c6c6c"/><rect x="52.4" y="42.1" width="1.0" height="1.0" fill="#959595"/><rect x="214.8" y="292.9" width="0.9" height="0.9" fill="#6d6d6d"/><rect x="216.2" y="29.0" width="1.4" height="0.9" fill="#757575"/><rect x="17.6" y="239.6" width="1.5" height="1.0" fill="#737373"/><rect x="62.6" y="28.6" width="1.5" height="1.5" fill="#858585"/><rect x="216.8" y="133.0" width="1.3" height="1.3" fill="#656565"/><rect x="214.9" y="49.3" width="1.1" height="1.1" fill="#989898"/><rect x="83.6" y="181.0" width="1.5" height="1.5" fill="#5d5d5d"/><rect x="335.2" y="417.7" width="0.9" height="0.9" fill="#6b6b6b"/><rect x="127.3" y="83.7" width="1.0" height="1.0" fill="#585858"/><rect x="78.7" y="317.0" width="2.2" height="1.5" fill="#5b5b5b"/><rect x="358.0" y="97.7" width="0.9" height="0.9" fill="#797979"/><rect x="167.0" y="57.9" width="1.3" height="1.3" fill="#808080"/><rect x="7.5" y="291.7" width="1.3" height="1.3" fill="#606060"/><rect x="364.4" y="405.9" width="1.0" height="1.0" fill="#6b6b6b"/><rect x="324.3" y="366.0" width="2.0" height="1.3" fill="#5c5c5c"/><rect x="6.3" y="71.5" width="2.2" height="1.5" fill="#7f7f7f"/><rect x="285.6" y="244.0" width="1.1" height="1.1" fill="#707070"/><rect x="262.2" y="349.0" width="0.9" height="0.9" fill="#808080"/><rect x="92.2" y="351.8" width="1.1" height="1.1" fill="#696969"/><rect x="341.9" y="119.7" width="1.5" height="1.0" fill="#979797"/><rect x="84.1" y="373.9" width="1.5" height="1.5" fill="#828282"/><rect x="61.4" y="348.0" width="0.9" height="0.9" fill="#5d5d5d"/><rect x="338.3" y="303.6" width="1.0" height="1.0" fill="#848484"/><rect x="401.2" y="260.4" width="1.5" height="1.0" fill="#707070"/><rect x="182.3" y="289.4" width="0.9" height="0.9" fill="#606060"/><rect x="71.4" y="202.7" width="1.7" height="1.1" fill="#737373"/><rect x="314.7" y="130.5" width="0.9" height="0.9" fill="#6c6c6c"/><rect x="175.0" y="296.9" width="0.9" height="0.9" fill="#7c7c7c"/><rect x="161.5" y="245.9" width="1.3" height="1.3" fill="#8e8e8e"/><rect x="295.3" y="79.9" width="1.1" height="1.1" fill="#6c6c6c"/><rect x="12.9" y="11.5" width="1.3" height="1.3" fill="#919191"/><rect x="257.8" y="312.4" width="1.4" height="0.9" fill="#6c6c6c"/><rect x="251.9" y="40.0" width="1.0" height="1.0" fill="#7b7b7b"/><rect x="131.0" y="13.5" width="1.3" height="1.3" fill="#818181"/><rect x="108.1" y="192.8" width="1.5" height="1.5" fill="#767676"/><rect x="382.4" y="214.6" width="1.5" height="1.5" fill="#898989"/><rect x="322.4" y="389.9" width="1.1" height="1.1" fill="#6e6e6e"/><rect x="341.8" y="99.2" width="1.3" height="1.3" fill="#6c6c6c"/><rect x="11.8" y="51.2" width="1.3" height="1.3" fill="#888888"/><rect x="271.2" y="327.1" width="1.0" height="1.0" fill="#8a8a8a"/><rect x="285.8" y="261.2" width="1.0" height="1.0" fill="#7c7c7c"/><rect x="297.6" y="127.1" width="1.3" height="1.3" fill="#7b7b7b"/><rect x="368.8" y="293.5" width="1.7" height="1.1" fill="#666666"/><rect x="196.5" y="9.6" width="1.4" height="0.9" fill="#969696"/><rect x="220.2" y="228.3" width="1.1" height="1.1" fill="#676767"/><rect x="368.2" y="161.0" width="1.5" height="1.5" fill="#838383"/><rect x="0.7" y="352.9" width="2.2" height="1.5" fill="#6b6b6b"/><rect x="147.7" y="246.0" width="0.9" height="0.9" fill="#5d5d5d"/><rect x="236.9" y="46.9" width="0.9" height="0.9" fill="#7a7a7a"/><rect x="188.3" y="69.6" width="1.4" height="0.9" fill="#747474"/><rect x="11.3" y="222.0" width="0.9" height="0.9" fill="#959595"/><rect x="216.6" y="200.4" width="1.1" height="1.1" fill="#8b8b8b"/><rect x="151.5" y="407.1" width="1.5" height="1.0" fill="#919191"/><rect x="190.0" y="348.4" width="1.0" height="1.0" fill="#848484"/><rect x="149.5" y="68.3" width="1.7" height="1.1" fill="#767676"/><rect x="347.3" y="105.2" width="2.0" height="1.3" fill="#808080"/><rect x="243.6" y="154.9" width="1.5" height="1.0" fill="#929292"/><rect x="278.5" y="395.1" width="1.0" height="1.0" fill="#838383"/><rect x="239.8" y="385.1" width="1.5" height="1.5" fill="#888888"/><rect x="129.9" y="220.4" width="1.5" height="1.5" fill="#575757"/><rect x="232.9" y="33.1" width="1.5" height="1.5" fill="#5c5c5c"/><rect x="384.2" y="286.4" width="1.5" height="1.5" fill="#8b8b8b"/><rect x="396.7" y="259.2" width="1.0" height="1.0" fill="#6c6c6c"/><rect x="237.5" y="162.8" width="1.7" height="1.1" fill="#707070"/><rect x="97.0" y="398.6" width="1.0" height="1.0" fill="#777777"/><rect x="98.8" y="29.5" width="1.7" height="1.1" fill="#696969"/><rect x="286.5" y="297.7" width="0.9" height="0.9" fill="#929292"/><rect x="217.3" y="294.8" width="1.3" height="1.3" fill="#626262"/><rect x="358.8" y="221.0" width="0.9" height="0.9" fill="#606060"/><rect x="127.9" y="241.0" width="2.0" height="1.3" fill="#6b6b6b"/><rect x="63.1" y="398.7" width="1.5" height="1.5" fill="#5a5a5a"/><rect x="14.1" y="43.4" width="1.7" height="1.1" fill="#7c7c7c"/><rect x="260.3" y="38.8" width="0.9" height="0.9" fill="#969696"/><rect x="389.7" y="196.1" width="1.1" height="1.1" fill="#707070"/><rect x="42.2" y="80.9" width="0.9" height="0.9" fill="#878787"/><rect x="301.6" y="54.8" width="1.4" height="0.9" fill="#757575"/><rect x="254.0" y="219.8" width="1.1" height="1.1" fill="#8f8f8f"/><rect x="167.5" y="129.9" width="1.0" height="1.0" fill="#929292"/><rect x="157.4" y="62.3" width="1.3" height="1.3" fill="#7a7a7a"/><rect x="117.3" y="201.6" width="0.9" height="0.9" fill="#8b8b8b"/><rect x="313.7" y="190.4" width="1.5" height="1.5" fill="#919191"/><rect x="197.6" y="417.9" width="1.7" height="1.1" fill="#8a8a8a"/><rect x="344.0" y="118.4" width="1.1" height="1.1" fill="#777777"/><rect x="135.9" y="82.2" width="1.1" height="1.1" fill="#656565"/><rect x="171.7" y="241.5" width="1.4" height="0.9" fill="#6d6d6d"/><rect x="232.4" y="233.2" width="1.1" height="1.1" fill="#5c5c5c"/><rect x="173.0" y="118.5" width="0.9" height="0.9" fill="#707070"/><rect x="333.6" y="223.6" width="1.5" height="1.5" fill="#999999"/><rect x="220.3" y="130.0" width="0.9" height="0.9" fill="#6b6b6b"/><rect x="137.7" y="278.0" width="1.1" height="1.1" fill="#999999"/><rect x="380.2" y="21.6" width="1.3" height="1.3" fill="#585858"/><rect x="314.3" y="121.3" width="1.5" height="1.5" fill="#727272"/><rect x="138.1" y="141.1" width="2.0" height="1.3" fill="#848484"/><rect x="104.3" y="151.2" width="1.5" height="1.0" fill="#6b6b6b"/><rect x="223.1" y="204.3" width="1.1" height="1.1" fill="#8e8e8e"/><rect x="326.2" y="159.9" width="1.0" height="1.0" fill="#656565"/><rect x="133.7" y="37.0" width="1.1" height="1.1" fill="#979797"/><rect x="62.3" y="23.3" width="1.7" height="1.1" fill="#808080"/><rect x="89.3" y="110.1" width="1.1" height="1.1" fill="#7a7a7a"/><rect x="416.0" y="163.5" width="1.1" height="1.1" fill="#8d8d8d"/><rect x="411.5" y="357.2" width="1.1" height="1.1" fill="#5a5a5a"/><rect x="6.8" y="32.3" width="1.3" height="1.3" fill="#898989"/><rect x="187.4" y="66.3" width="1.3" height="1.3" fill="#828282"/><rect x="208.8" y="187.6" width="1.4" height="0.9" fill="#878787"/><rect x="232.5" y="182.1" width="1.3" height="1.3" fill="#8b8b8b"/><rect x="243.9" y="392.3" width="1.5" height="1.5" fill="#979797"/><rect x="411.9" y="325.9" width="1.5" height="1.5" fill="#7f7f7f"/><rect x="274.3" y="24.3" width="1.0" height="1.0" fill="#787878"/><rect x="19.0" y="266.8" width="1.5" height="1.0" fill="#5b5b5b"/><rect x="149.0" y="396.9" width="1.0" height="1.0" fill="#969696"/><rect x="63.5" y="6.3" width="1.1" height="1.1" fill="#787878"/><rect x="387.5" y="204.8" width="1.3" height="1.3" fill="#7c7c7c"/><rect x="128.9" y="236.9" width="1.5" height="1.5" fill="#8c8c8c"/><rect x="222.3" y="250.3" width="2.2" height="1.5" fill="#929292"/><rect x="134.9" y="168.0" width="1.5" height="1.5" fill="#797979"/><rect x="25.2" y="22.5" width="2.0" height="1.3" fill="#808080"/><rect x="38.5" y="365.8" width="0.9" height="0.9" fill="#5b5b5b"/><rect x="28.7" y="45.1" width="0.9" height="0.9" fill="#6f6f6f"/><rect x="194.8" y="344.0" width="1.5" height="1.5" fill="#5e5e5e"/><rect x="242.9" y="174.3" width="1.1" height="1.1" fill="#7e7e7e"/><rect x="47.1" y="133.3" width="2.0" height="1.3" fill="#636363"/><rect x="289.7" y="391.2" width="1.3" height="1.3" fill="#616161"/><rect x="60.9" y="416.5" width="0.9" height="0.9" fill="#848484"/><rect x="207.2" y="349.0" width="1.0" height="1.0" fill="#6b6b6b"/><rect x="14.5" y="99.0" width="0.9" height="0.9" fill="#6a6a6a"/><rect x="216.8" y="324.7" width="1.5" height="1.5" fill="#656565"/><rect x="411.6" y="324.2" width="1.4" height="0.9" fill="#707070"/><rect x="316.4" y="79.3" width="1.1" height="1.1" fill="#8d8d8d"/><rect x="223.1" y="242.6" width="1.4" height="0.9" fill="#5d5d5d"/><rect x="350.9" y="246.6" width="1.4" height="0.9" fill="#646464"/><rect x="416.8" y="6.6" width="1.5" height="1.0" fill="#818181"/><rect x="203.8" y="118.5" width="1.1" height="1.1" fill="#787878"/><rect x="366.8" y="390.8" width="0.9" height="0.9" fill="#919191"/><rect x="327.9" y="373.8" width="1.5" height="1.5" fill="#6c6c6c"/><rect x="242.4" y="83.5" width="2.2" height="1.5" fill="#7d7d7d"/><rect x="274.6" y="2.6" width="2.0" height="1.3" fill="#818181"/><rect x="336.9" y="64.8" width="1.0" height="1.0" fill="#5b5b5b"/><rect x="217.0" y="57.7" width="1.3" height="1.3" fill="#595959"/><rect x="54.8" y="339.4" width="1.5" height="1.5" fill="#6d6d6d"/><rect x="192.9" y="278.0" width="1.0" height="1.0" fill="#818181"/><rect x="78.0" y="366.9" width="0.9" height="0.9" fill="#979797"/><rect x="6.6" y="48.3" width="1.0" height="1.0" fill="#696969"/><rect x="181.3" y="215.7" width="2.0" height="1.3" fill="#656565"/><rect x="370.4" y="190.0" width="1.5" height="1.5" fill="#636363"/><rect x="47.3" y="281.2" width="1.1" height="1.1" fill="#7f7f7f"/><rect x="90.6" y="239.3" width="1.1" height="1.1" fill="#757575"/><rect x="257.0" y="110.0" width="2.2" height="1.5" fill="#606060"/><rect x="129.5" y="301.9" width="1.1" height="1.1" fill="#909090"/><rect x="31.3" y="342.4" width="1.5" height="1.0" fill="#7a7a7a"/><rect x="176.1" y="102.6" width="1.5" height="1.5" fill="#818181"/><rect x="236.8" y="210.3" width="1.1" height="1.1" fill="#878787"/><rect x="30.3" y="265.6" width="0.9" height="0.9" fill="#696969"/><rect x="392.1" y="139.9" width="1.0" height="1.0" fill="#656565"/><rect x="193.1" y="379.4" width="1.5" height="1.0" fill="#6e6e6e"/><rect x="82.3" y="368.8" width="1.1" height="1.1" fill="#7e7e7e"/><rect x="156.5" y="121.9" width="1.1" height="1.1" fill="#767676"/><rect x="193.5" y="301.9" width="2.0" height="1.3" fill="#5d5d5d"/><rect x="224.0" y="387.0" width="0.9" height="0.9" fill="#838383"/><rect x="257.9" y="1.9" width="1.0" height="1.0" fill="#5a5a5a"/><rect x="400.9" y="184.5" width="2.2" height="1.5" fill="#6f6f6f"/><rect x="160.1" y="65.3" width="1.1" height="1.1" fill="#919191"/><rect x="80.4" y="48.0" width="1.5" height="1.0" fill="#757575"/><rect x="303.8" y="61.1" width="1.3" height="1.3" fill="#7e7e7e"/><rect x="414.9" y="99.4" width="1.3" height="1.3" fill="#6f6f6f"/><rect x="20.6" y="416.2" width="1.4" height="0.9" fill="#676767"/><rect x="195.1" y="100.1" width="1.5" height="1.0" fill="#8b8b8b"/><rect x="341.0" y="123.7" width="1.1" height="1.1" fill="#909090"/><rect x="230.0" y="30.8" width="2.0" height="1.3" fill="#969696"/><rect x="155.3" y="338.6" width="1.1" height="1.1" fill="#5e5e5e"/><rect x="277.2" y="285.5" width="1.3" height="1.3" fill="#787878"/><rect x="44.3" y="106.9" width="1.0" height="1.0" fill="#6b6b6b"/><rect x="75.9" y="386.9" width="1.1" height="1.1" fill="#6c6c6c"/><rect x="3.2" y="132.0" width="0.9" height="0.9" fill="#585858"/><rect x="65.8" y="411.5" width="2.0" height="1.3" fill="#787878"/><rect x="117.9" y="213.0" width="1.3" height="1.3" fill="#989898"/><rect x="397.3" y="175.5" width="1.3" height="1.3" fill="#8b8b8b"/><rect x="108.1" y="412.7" width="1.3" height="1.3" fill="#747474"/><rect x="304.6" y="377.8" width="1.3" height="1.3" fill="#919191"/></pattern>
<filter id="vir" filterUnits="userSpaceOnUse" x="71" y="175" width="1431" height="1073" color-interpolation-filters="sRGB"><feTurbulence type="fractalNoise" baseFrequency="0.8" numOctaves="2" seed="4" result="n"/><feColorMatrix in="n" type="matrix" values="1 0 0 0 0 1 0 0 0 0 1 0 0 0 0 0 0 0 0 1" result="ng"/><feComposite in="SourceGraphic" in2="ng" operator="arithmetic" k1="0" k2="1" k3="0.12" k4="-0.06" result="s"/><feComponentTransfer in="s"><feFuncR type="table" tableValues="0.2670 0.2726 0.2770 0.2803 0.2823 0.2832 0.2829 0.2814 0.2788 0.2752 0.2706 0.2651 0.2590 0.2522 0.2450 0.2374 0.2297 0.2220 0.2143 0.2068 0.1994 0.1924 0.1856 0.1790 0.1727 0.1666 0.1607 0.1548 0.1490 0.1433 0.1378 0.1324 0.1276 0.1235 0.1206 0.1194 0.1206 0.1248 0.1323 0.1433 0.1579 0.1757 0.1966 0.2201 0.2461 0.2741 0.3041 0.3359 0.3692 0.4040 0.4401 0.4775 0.5160 0.5555 0.5958 0.6369 0.6785 0.7204 0.7624 0.8042 0.8456 0.8863 0.9261 0.9649 0.9932"/><feFuncG type="table" tableValues="0.0049 0.0256 0.0503 0.0734 0.0950 0.1157 0.1359 0.1558 0.1755 0.1949 0.2141 0.2330 0.2515 0.2698 0.2877 0.3052 0.3224 0.3392 0.3556 0.3718 0.3876 0.4032 0.4186 0.4338 0.4488 0.4637 0.4785 0.4933 0.5081 0.5228 0.5375 0.5522 0.5669 0.5817 0.5964 0.6111 0.6258 0.6405 0.6550 0.6695 0.6838 0.6979 0.7118 0.7255 0.7389 0.7520 0.7647 0.7770 0.7889 0.8003 0.8111 0.8214 0.8312 0.8403 0.8487 0.8565 0.8637 0.8703 0.8764 0.8820 0.8873 0.8924 0.8973 0.9023 0.9062"/><feFuncB type="table" tableValues="0.3294 0.3531 0.3757 0.3972 0.4173 0.4361 0.4534 0.4692 0.4834 0.4960 0.5071 0.5166 0.5247 0.5316 0.5373 0.5419 0.5457 0.5488 0.5512 0.5531 0.5546 0.5558 0.5568 0.5574 0.5579 0.5581 0.5581 0.5578 0.5573 0.5563 0.5549 0.5530 0.5506 0.5474 0.5436 0.5390 0.5335 0.5271 0.5197 0.5112 0.5017 0.4910 0.4792 0.4662 0.4520 0.4366 0.4199 0.4020 0.3829 0.3626 0.3410 0.3182 0.2943 0.2693 0.2433 0.2166 0.1895 0.1626 0.1371 0.1150 0.0997 0.0954 0.1041 0.1239 0.1439"/></feComponentTransfer></filter>
<clipPath id="axclip"><rect x="71.5" y="175.5" width="1430.2" height="1072.2"/></clipPath>
</defs>
<g clip-path="url(#axclip)"><g filter="url(#vir)">
<rect x="60" y="170" width="1450" height="1085" fill="url(#gbase)"/>
<polygon points="540,160 1520,160 1520,281 770,361 540,361" fill="url(#gup)" filter="url(#b2)"/>
<rect x="1184" y="176" width="18" height="137" fill="#383838" filter="url(#b4)" opacity="0.6"/>
<polygon points="760,365 1520,284 1520,296 760,378" fill="#171717" filter="url(#b4)" opacity="0.55"/>
<rect x="60" y="160" width="688" height="1100" fill="#3b3b3b" filter="url(#b2)"/>
<polygon points="60,160 760,160 760,361 654,361 654,404 60,404" fill="url(#gtopv)" filter="url(#b2)"/>
<polygon points="60,160 760,160 760,361 654,361 654,404 60,404" fill="url(#gtoph)" filter="url(#b2)"/>
<polygon points="598,306 745,306 745,358 598,366" fill="#4f4f4f" filter="url(#b10)" opacity="0.75"/>
<rect x="60" y="384" width="128" height="876" fill="url(#gcol)" filter="url(#b4)"/>
<rect x="60" y="470" width="32" height="530" fill="#454545" filter="url(#b8)" opacity="0.6"/>
<polygon points="187,408 252,408 252,451 244,487 208,490 208,1260 187,1260" fill="#343434" filter="url(#b3)"/>
<rect x="187" y="640" width="21" height="620" fill="#434343" filter="url(#b3)" opacity="0.85"/>
<rect x="208" y="400" width="452" height="860" fill="url(#gboard)" filter="url(#b3)"/>
<rect x="405" y="385" width="255" height="255" fill="#3e3e3e" filter="url(#b25)" opacity="0.7"/>
<polygon points="208,492 250,489 250,737 208,737" fill="#4c4c4c" filter="url(#b3)"/>
<polygon points="263,401 402,397 402,737 250,737 250,452" fill="#5a5a5a" filter="url(#b3)"/>
<polygon points="266,404 400,400 400,655 253,655 253,455" fill="#676767" filter="url(#b6)" opacity="0.95"/>
<rect x="660" y="362" width="87" height="898" fill="url(#grb)" filter="url(#b2)"/>
<rect x="729" y="372" width="17" height="148" fill="#4f4f4f" filter="url(#b4)" opacity="0.7"/>
<rect x="748" y="362" width="6" height="898" fill="#1f1f1f" filter="url(#b1)"/>
<rect x="754" y="362" width="18" height="898" fill="#2b2b2b" filter="url(#b2)"/>
<rect x="270" y="400" width="4" height="340" fill="#383838" filter="url(#b2)" opacity="0.45"/>
<rect x="270" y="738" width="4" height="522" fill="#383838" filter="url(#b2)" opacity="0.2025"/>
<rect x="313" y="400" width="5" height="340" fill="#383838" filter="url(#b2)" opacity="0.5"/>
<rect x="313" y="738" width="5" height="522" fill="#383838" filter="url(#b2)" opacity="0.225"/>
<rect x="357" y="400" width="5" height="340" fill="#383838" filter="url(#b2)" opacity="0.5"/>
<rect x="357" y="738" width="5" height="522" fill="#383838" filter="url(#b2)" opacity="0.225"/>
<rect x="400.5" y="400" width="6" height="340" fill="#292929" filter="url(#b2)" opacity="0.6"/>
<rect x="400.5" y="738" width="6" height="522" fill="#292929" filter="url(#b2)" opacity="0.27"/>
<rect x="443.5" y="400" width="5" height="340" fill="#2b2b2b" filter="url(#b2)" opacity="0.3"/>
<rect x="443.5" y="738" width="5" height="522" fill="#2b2b2b" filter="url(#b2)" opacity="0.135"/>
<rect x="478" y="400" width="4" height="340" fill="#2b2b2b" filter="url(#b2)" opacity="0.25"/>
<rect x="478" y="738" width="4" height="522" fill="#2b2b2b" filter="url(#b2)" opacity="0.1125"/>
<rect x="517.5" y="400" width="5" height="340" fill="#2b2b2b" filter="url(#b2)" opacity="0.3"/>
<rect x="517.5" y="738" width="5" height="522" fill="#2b2b2b" filter="url(#b2)" opacity="0.135"/>
<rect x="563" y="400" width="4" height="340" fill="#2b2b2b" filter="url(#b2)" opacity="0.25"/>
<rect x="563" y="738" width="4" height="522" fill="#2b2b2b" filter="url(#b2)" opacity="0.1125"/>
<rect x="607.5" y="400" width="5" height="340" fill="#2b2b2b" filter="url(#b2)" opacity="0.3"/>
<rect x="607.5" y="738" width="5" height="522" fill="#2b2b2b" filter="url(#b2)" opacity="0.135"/>
<rect x="137.5" y="450" width="3.5" height="810" fill="#616161" filter="url(#b2)" opacity="0.45"/>
<polygon points="190,568.5 660,542.5 660,549.5 190,575.5" fill="#242424" filter="url(#b2)" opacity="0.85"/>
<polygon points="190,653.5 660,636.5 660,643.5 190,660.5" fill="#242424" filter="url(#b2)" opacity="0.85"/>
<polygon points="190,729.5 660,729.5 660,736.5 190,736.5" fill="#242424" filter="url(#b2)" opacity="0.85"/>
<polygon points="190,813.5 660,822.5 660,829.5 190,820.5" fill="#242424" filter="url(#b2)" opacity="0.85"/>
<polygon points="190,896.5 660,914.5 660,921.5 190,903.5" fill="#242424" filter="url(#b2)" opacity="0.85"/>
<polygon points="190,978.5 660,1006.5 660,1013.5 190,985.5" fill="#242424" filter="url(#b2)" opacity="0.85"/>
<polygon points="190,1060.5 660,1101.5 660,1108.5 190,1067.5" fill="#242424" filter="url(#b2)" opacity="0.85"/>
<polygon points="190,1146.5 660,1192.5 660,1199.5 190,1153.5" fill="#242424" filter="url(#b2)" opacity="0.85"/>
<polygon points="200,1228 345,1246 345,1262 200,1262" fill="#141414" filter="url(#b2)"/>
<polygon points="143.5,1129 190,1126 190,1187 143.5,1184" fill="#262626" filter="url(#b1)"/>
<polygon points="60,947.5 100,946.5 189,946.5 189,980 130,981 60,975" fill="#1d1d1d" filter="url(#b3)"/>
<polygon points="60,962 189,964 189,973 60,970" fill="#141414" filter="url(#b3)" opacity="0.8"/>
<g transform="rotate(2.8 132 959.2)">
<ellipse cx="128" cy="959.2" rx="52" ry="2.2" fill="#5c5c5c" filter="url(#b2)"/>
<ellipse cx="131" cy="959.2" rx="22" ry="1.5" fill="#a8a8a8" filter="url(#b1)"/>
<ellipse cx="132" cy="959.2" rx="8" ry="1.2" fill="#ffffff" filter="url(#b1)"/>
</g>
<g transform="rotate(-6 780 212)"><ellipse cx="780" cy="212" rx="16" ry="30" fill="#0f0f0f" filter="url(#b2)"/></g>
<ellipse cx="766" cy="217.6" rx="8" ry="2.3" fill="#808080" filter="url(#b1)"/>
<ellipse cx="762" cy="217.9" rx="1.6" ry="1.5" fill="#ffffff" filter="url(#b1)"/>
<ellipse cx="767.3" cy="217.2" rx="2.6" ry="1.3" fill="#ffffff" filter="url(#b1)"/>
<ellipse cx="776" cy="217.2" rx="2.6" ry="1.6" fill="#7a7a7a" filter="url(#b1)"/>
<polygon points="473,280 481,268 488,255 494,257 502,258 496,266 495,288 489,286 486,273" fill="#161616" filter="url(#b2)" opacity="0.9"/>
<polygon points="531,254 545,251 559,257 584,276 595,316 607,348 609,365 582,366 566,321 550,293" fill="#2a2a2a" filter="url(#b4)" opacity="0.75"/>
<polygon points="536,258 552,260 570,290 585,330 596,362 584,362 566,322 548,288" fill="#262626" filter="url(#b5)" opacity="0.5"/>
<path d="M530 177 L527 215 L523 245" stroke="#242424" stroke-width="4" fill="none" filter="url(#b2)" opacity="0.55"/>
<path d="M494 222 L486 252" stroke="#242424" stroke-width="3" fill="none" filter="url(#b2)" opacity="0.35"/>
<rect x="60" y="170" width="1450" height="1085" fill="url(#salt)"/>
</g>
<path d="M72.5 175.5 V1247.5 M246.5 175.5 V1247.5 M421.5 175.5 V1247.5 M595.5 175.5 V1247.5 M770.5 175.5 V1247.5 M945.5 175.5 V1247.5 M1119.5 175.5 V1247.5 M1294.5 175.5 V1247.5 M1468.5 175.5 V1247.5 M71.5 175.5 H1501.5 M71.5 315.5 H1501.5 M71.5 454.5 H1501.5 M71.5 594.5 H1501.5 M71.5 734.5 H1501.5 M71.5 873.5 H1501.5 M71.5 1013.5 H1501.5 M71.5 1153.5 H1501.5" stroke="#b0b0b0" stroke-width="1.1" fill="none"/>
<polygon points="207.6,488.3 618.5,457.4 616.4,1182.3 207.3,1149.2" fill="none" stroke="#ffa500" stroke-width="2.1" stroke-dasharray="7.7 3.35"/>
<polygon points="271.7,567.5 298.9,567.9 294.9,574.3 278.0,574.3 278.0,590.5 272.0,594.3" fill="none" stroke="#ff0000" stroke-width="2.1" stroke-linejoin="miter"/>
<polygon points="549.5,551.9 522.8,551.9 526.6,558.4 543.8,558.4 543.8,575.0 549.5,578.9" fill="none" stroke="#ff0000" stroke-width="2.1" stroke-linejoin="miter"/>
<polygon points="275.5,1065.4 275.5,1038.9 281.1,1042.8 281.1,1059.5 298.1,1059.5 302.5,1065.4" fill="none" stroke="#ff0000" stroke-width="2.1" stroke-linejoin="miter"/>
<polygon points="552.3,1092.7 552.3,1066.5 546.7,1070.5 546.7,1087.1 530.0,1087.1 525.6,1092.7" fill="none" stroke="#ff0000" stroke-width="2.1" stroke-linejoin="miter"/>
<line x1="405.103" y1="581" x2="407.997" y2="1058" stroke="#ff0000" stroke-width="3.1"/><polygon points="405.01,565.50 394.74,579.56 415.44,579.44" fill="#ff0000" stroke="#ff0000" stroke-width="3" stroke-linejoin="round"/><polygon points="408.09,1073.50 397.66,1059.56 418.36,1059.44" fill="#ff0000" stroke="#ff0000" stroke-width="3" stroke-linejoin="round"/>
<line x1="294.796" y1="817.66" x2="530.204" y2="822.64" stroke="#ff0000" stroke-width="3.1"/><polygon points="279.30,817.33 293.08,827.98 293.52,807.28" fill="#ff0000" stroke="#ff0000" stroke-width="3" stroke-linejoin="round"/><polygon points="545.70,822.97 531.48,833.02 531.92,812.32" fill="#ff0000" stroke="#ff0000" stroke-width="3" stroke-linejoin="round"/>
</g>
<rect x="71.5" y="175.5" width="1430" height="1072" fill="none" stroke="#000" stroke-width="1.1"/>
<text x="71.7191" y="1268.2" text-anchor="middle" class="tl">0</text>
<text x="246.271" y="1268.2" text-anchor="middle" class="tl">250</text>
<text x="420.823" y="1268.2" text-anchor="middle" class="tl">500</text>
<text x="595.375" y="1268.2" text-anchor="middle" class="tl">750</text>
<text x="769.927" y="1268.2" text-anchor="middle" class="tl">1000</text>
<text x="944.479" y="1268.2" text-anchor="middle" class="tl">1250</text>
<text x="1119.03" y="1268.2" text-anchor="middle" class="tl">1500</text>
<text x="1293.58" y="1268.2" text-anchor="middle" class="tl">1750</text>
<text x="1468.14" y="1268.2" text-anchor="middle" class="tl">2000</text>
<text x="62.9" y="180.219" text-anchor="end" class="tl">0</text>
<text x="62.9" y="319.861" text-anchor="end" class="tl">200</text>
<text x="62.9" y="459.503" text-anchor="end" class="tl">400</text>
<text x="62.9" y="599.145" text-anchor="end" class="tl">600</text>
<text x="62.9" y="738.787" text-anchor="end" class="tl">800</text>
<text x="62.9" y="878.429" text-anchor="end" class="tl">1000</text>
<text x="62.9" y="1018.07" text-anchor="end" class="tl">1200</text>
<text x="62.9" y="1157.71" text-anchor="end" class="tl">1400</text>
<path d="M72.5 1248 v4.9 M246.5 1248 v4.9 M421.5 1248 v4.9 M595.5 1248 v4.9 M770.5 1248 v4.9 M945.5 1248 v4.9 M1119.5 1248 v4.9 M1294.5 1248 v4.9 M1468.5 1248 v4.9 M71 175.5 h-4.9 M71 315.5 h-4.9 M71 454.5 h-4.9 M71 594.5 h-4.9 M71 734.5 h-4.9 M71 873.5 h-4.9 M71 1013.5 h-4.9 M71 1153.5 h-4.9" stroke="#000" stroke-width="1.1" fill="none"/>
</svg>
<div class="hd" style="top:48px">- Image</div>
<div class="gb" style="top:68px;height:77px"></div>
<div class="lb" style="left:1534px;top:79px;width:80px;height:24px;line-height:25px">X size:</div>
<div class="en" style="left:1620px;top:79px">2048<i class="cur"></i></div>
<div class="lb" style="left:1726px;top:79px;width:80px;height:24px;line-height:25px">pixel</div>
<div class="lb" style="left:1534px;top:109px;width:80px;height:24px;line-height:25px">Y size:</div>
<div class="en" style="left:1620px;top:109px">1536</div>
<div class="lb" style="left:1726px;top:109px;width:80px;height:24px;line-height:25px">pixel</div>
<div class="hd" style="top:155px">- Fiducials</div>
<div class="gb" style="top:175px;height:413px"></div>
<div class="lb" style="left:1534px;top:186px;width:80px;height:24px;line-height:25px">Width :</div>
<div class="en" style="left:1620px;top:186px">60.0</div>
<div class="lb" style="left:1726px;top:186px;width:50px;height:24px;line-height:25px">mm</div>
<div class="lb" style="left:1534px;top:216px;width:80px;height:24px;line-height:25px">Height:</div>
<div class="en" style="left:1620px;top:216px">60.0</div>
<div class="lb" style="left:1726px;top:216px;width:50px;height:24px;line-height:25px">mm</div>
<div class="lb" style="left:1534px;top:244px;width:220px;height:24px;line-height:25px">Top-Left&nbsp; pixel (x, y):</div>
<div class="sp" style="left:1614px;top:272px"></div>
<div class="en" style="left:1640px;top:272px">287.5</div>
<div class="lb" style="left:1746px;top:272px;width:10px;height:24px;line-height:25px">,</div>
<div class="en" style="left:1760px;top:272px">563.0</div>
<div class="lb" style="left:1534px;top:300px;width:220px;height:24px;line-height:25px">Top-Right pixel (x, y):</div>
<div class="sp" style="left:1614px;top:328px"></div>
<div class="en" style="left:1640px;top:328px">684.1</div>
<div class="lb" style="left:1746px;top:328px;width:10px;height:24px;line-height:25px">,</div>
<div class="en" style="left:1760px;top:328px">540.4</div>
<div class="lb" style="left:1534px;top:356px;width:220px;height:24px;line-height:25px">Bot-Left&nbsp; pixel (x, y):</div>
<div class="sp" style="left:1614px;top:384px"></div>
<div class="en" style="left:1640px;top:384px">292.5</div>
<div class="lb" style="left:1746px;top:384px;width:10px;height:24px;line-height:25px">,</div>
<div class="en" style="left:1760px;top:384px">1275.0</div>
<div class="lb" style="left:1534px;top:412px;width:220px;height:24px;line-height:25px">Bot-Right pixel (x, y):</div>
<div class="sp" style="left:1614px;top:440px"></div>
<div class="en" style="left:1640px;top:440px">688.3</div>
<div class="lb" style="left:1746px;top:440px;width:10px;height:24px;line-height:25px">,</div>
<div class="en" style="left:1760px;top:440px">1314.4</div>
<div class="lb" style="left:1534px;top:468px;width:310px;height:24px;line-height:25px">Angle of incidence (x, y) [deg]:</div>
<div class="sp" style="left:1614px;top:496px"></div>
<div class="en" style="left:1640px;top:496px">0.0</div>
<div class="lb" style="left:1746px;top:496px;width:10px;height:24px;line-height:25px">,</div>
<div class="en" style="left:1760px;top:496px">0.0</div>
<div class="lb" style="left:1534px;top:524px;width:310px;height:24px;line-height:25px">Center offset (x, y) [mm]:</div>
<div class="sp" style="left:1614px;top:552px"></div>
<div class="en" style="left:1640px;top:552px">0.000</div>
<div class="lb" style="left:1746px;top:552px;width:10px;height:24px;line-height:25px">,</div>
<div class="en" style="left:1760px;top:552px">0.000</div>
<div class="hd" style="top:598px">- Margins</div>
<div class="gb" style="top:618px;height:137px"></div>
<div class="lb" style="left:1534px;top:629px;width:80px;height:24px;line-height:25px">Top&nbsp;&nbsp; :</div>
<div class="en" style="left:1620px;top:629px">130.0</div>
<div class="lb" style="left:1726px;top:629px;width:50px;height:24px;line-height:25px">pixel</div>
<div class="lb" style="left:1534px;top:659px;width:80px;height:24px;line-height:25px">Bottom :</div>
<div class="en" style="left:1620px;top:659px">130.0</div>
<div class="lb" style="left:1726px;top:659px;width:50px;height:24px;line-height:25px">pixel</div>
<div class="lb" style="left:1534px;top:689px;width:80px;height:24px;line-height:25px">Left&nbsp; :</div>
<div class="en" style="left:1620px;top:689px">100.0</div>
<div class="lb" style="left:1726px;top:689px;width:50px;height:24px;line-height:25px">pixel</div>
<div class="lb" style="left:1534px;top:719px;width:80px;height:24px;line-height:25px">Right&nbsp; :</div>
<div class="en" style="left:1620px;top:719px">100.0</div>
<div class="lb" style="left:1726px;top:719px;width:50px;height:24px;line-height:25px">pixel</div>
<div class="bt" style="left:1522px;top:786px;width:113px">Reload</div>
<div class="bt" style="left:1522px;top:817px;width:113px">Apply</div>
<div class="bt" style="left:1641px;top:786px;width:112px">Reset</div>
<div class="bt" style="left:1641px;top:817px;width:112px">OK</div>
<div class="bt" style="left:1759px;top:786px;width:113px">Default</div>
<div class="bt" style="left:1759px;top:817px;width:113px">Cancel</div>
</div></body></html>
